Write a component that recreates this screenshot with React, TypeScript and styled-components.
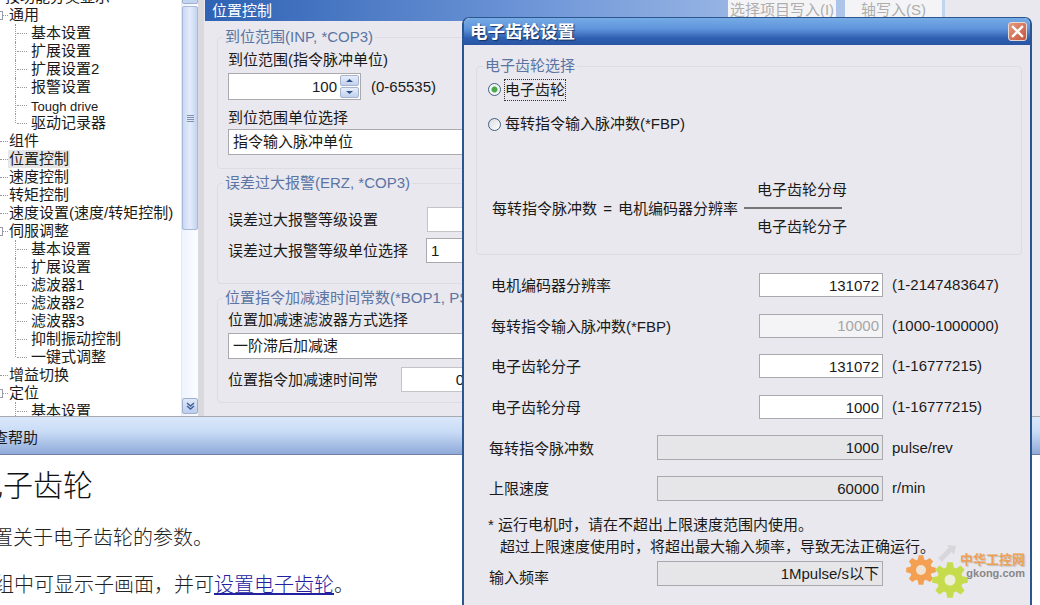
import React from "react";
import styled, { createGlobalStyle } from "styled-components";

const TREE = [
  { title: "按功能分类显示", level: 0, cut: true },
  { title: "通用", level: 0, box: true },
  { title: "基本设置", level: 1 },
  { title: "扩展设置", level: 1 },
  { title: "扩展设置2", level: 1 },
  { title: "报警设置", level: 1 },
  { title: "Tough drive", level: 1, small: true },
  { title: "驱动记录器", level: 1, last: true },
  { title: "组件", level: 0 },
  { title: "位置控制", level: 0, selected: true },
  { title: "速度控制", level: 0 },
  { title: "转矩控制", level: 0 },
  { title: "速度设置(速度/转矩控制)", level: 0 },
  { title: "伺服调整", level: 0, box: true },
  { title: "基本设置", level: 1 },
  { title: "扩展设置", level: 1 },
  { title: "滤波器1", level: 1 },
  { title: "滤波器2", level: 1 },
  { title: "滤波器3", level: 1 },
  { title: "抑制振动控制", level: 1 },
  { title: "一键式调整", level: 1, last: true },
  { title: "增益切换", level: 0 },
  { title: "定位", level: 0, box: true },
  { title: "基本设置", level: 1 },
];

const FORM_ROWS = [
  { label: "电机编码器分辨率", value: "131072", range: "(1-2147483647)" },
  { label: "每转指令输入脉冲数(*FBP)", value: "10000", range: "(1000-1000000)", disabled: true },
  { label: "电子齿轮分子", value: "131072", range: "(1-16777215)" },
  { label: "电子齿轮分母", value: "1000", range: "(1-16777215)" },
];

const gearPath = (cx: number, cy: number, inner: number, outer: number, teeth: number) => {
  const points: string[] = [];
  const step = (Math.PI * 2) / teeth;
  for (let i = 0; i < teeth; i++) {
    const a = i * step;
    [
      [a - step * 0.38, inner],
      [a - step * 0.2, outer],
      [a + step * 0.2, outer],
      [a + step * 0.38, inner],
    ].forEach(([t, r]) => {
      points.push(`${(cx + Math.cos(t) * r).toFixed(1)},${(cy + Math.sin(t) * r).toFixed(1)}`);
    });
  }
  return `M${points.join("L")}Z`;
};

const App = () => {
  return (
    <Screen>
      <GlobalStyle />
      <TopArea>
        <Sidebar>
          <Tree>
            <TreeList>
              {TREE.map((item, index) => (
                <TreeRow key={index} $level={item.level} $last={item.last}>
                  {item.box && <ExpandBox />}
                  <TreeText $selected={item.selected} $small={item.small} $cut={item.cut}>
                    {item.title}
                  </TreeText>
                </TreeRow>
              ))}
            </TreeList>
          </Tree>
          <Scrollbar>
            <ScrollCap />
            <ScrollThumb>
              <Grip />
            </ScrollThumb>
            <ScrollDown>
              <svg width="11" height="10" viewBox="0 0 11 10">
                <path d="M2 2l3.5 3 3.5-3M2 5l3.5 3 3.5-3" fill="none" stroke="#3f5f96" strokeWidth="1.4" />
              </svg>
            </ScrollDown>
          </Scrollbar>
        </Sidebar>
        <Panel>
          <PanelHeader>
            <PanelTitle>位置控制</PanelTitle>
            <HeaderButton $width={108}>选择项目写入(I)</HeaderButton>
            <HeaderButton $width={97}>轴写入(S)</HeaderButton>
          </PanelHeader>
          <PanelBody>
            <Group $height={141}>
              <GroupTitle>到位范围(INP, *COP3)</GroupTitle>
              <FieldLabel $top={5}>到位范围(指令脉冲单位)</FieldLabel>
              <Row $top={4}>
                <SpinBox>
                  100
                  <SpinButtons>
                    <SpinButton>
                      <svg width="9" height="5" viewBox="0 0 9 5"><path d="M1 4l3.5-3 3.5 3z" fill="#2f4f86" /></svg>
                    </SpinButton>
                    <SpinButton>
                      <svg width="9" height="5" viewBox="0 0 9 5"><path d="M1 1l3.5 3 3.5-3z" fill="#2f4f86" /></svg>
                    </SpinButton>
                  </SpinButtons>
                </SpinBox>
                <RangeText $gap={10}>(0-65535)</RangeText>
              </Row>
              <FieldLabel $top={9}>到位范围单位选择</FieldLabel>
              <SelectBox $top={2}>指令输入脉冲单位</SelectBox>
            </Group>
            <Group $height={110}>
              <GroupTitle>误差过大报警(ERZ, *COP3)</GroupTitle>
              <Row $top={15}>
                <RowLabel $width={199}>误差过大报警等级设置</RowLabel>
                <PanelField />
              </Row>
              <Row $top={6}>
                <RowLabel $width={198}>误差过大报警等级单位选择</RowLabel>
                <PanelField $select>1</PanelField>
              </Row>
            </Group>
            <Group $height={114}>
              <GroupTitle>位置指令加减速时间常数(*BOP1, PST1)</GroupTitle>
              <FieldLabel $top={4}>位置加减速滤波器方式选择</FieldLabel>
              <SelectBox $top={4}>一阶滞后加减速</SelectBox>
              <Row $top={8}>
                <RowLabel $width={173}>位置指令加减速时间常</RowLabel>
                <PanelField $value>0</PanelField>
              </Row>
            </Group>
          </PanelBody>
        </Panel>
      </TopArea>
      <HelpBar>
        <HelpBarText>查帮助</HelpBarText>
      </HelpBar>
      <HelpContent>
        <HelpTitle>电子齿轮</HelpTitle>
        <HelpLine $top={18} $shift={-27}>设置关于电子齿轮的参数。</HelpLine>
        <HelpLine $top={19} $shift={-26}>
          在组中可显示子画面，并可<HelpLink>设置电子齿轮</HelpLink>。
        </HelpLine>
      </HelpContent>

      <Dialog>
        <DialogTitleBar>
          <DialogTitle>电子齿轮设置</DialogTitle>
          <CloseButton>
            <svg width="13" height="13" viewBox="0 0 13 13">
              <path d="M2 2l9 9M11 2l-9 9" stroke="#fff" strokeWidth="2.4" strokeLinecap="square" />
            </svg>
          </CloseButton>
        </DialogTitleBar>
        <DialogBody>
          <DialogGroup>
            <DialogLegend>电子齿轮选择</DialogLegend>
            <RadioRow $top={3}>
              <Radio $checked />
              <FocusLabel>电子齿轮</FocusLabel>
            </RadioRow>
            <RadioRow $top={13}>
              <Radio />
              <RadioLabel>每转指令输入脉冲数(*FBP)</RadioLabel>
            </RadioRow>
            <Formula>
              <FormulaText>每转指令脉冲数 = 电机编码器分辨率</FormulaText>
              <Fraction>
                <FractionTop>电子齿轮分母</FractionTop>
                <FractionBottom>电子齿轮分子</FractionBottom>
              </Fraction>
            </Formula>
          </DialogGroup>
          <FormRows>
            {FORM_ROWS.map((row, index) => (
              <FormRow key={index}>
                <FormLabel $width={268} $inset={15}>{row.label}</FormLabel>
                <FormInput readOnly value={row.value} $disabled={row.disabled} />
                <RangeText $gap={9}>{row.range}</RangeText>
              </FormRow>
            ))}
            <FormRow>
              <FormLabel $width={168} $inset={13}>每转指令脉冲数</FormLabel>
              <FormDisplay>1000</FormDisplay>
              <RangeText $gap={9}>pulse/rev</RangeText>
            </FormRow>
            <FormRow>
              <FormLabel $width={168} $inset={13}>上限速度</FormLabel>
              <FormDisplay>60000</FormDisplay>
              <RangeText $gap={9}>r/min</RangeText>
            </FormRow>
          </FormRows>
          <Note>
            <div>* 运行电机时，请在不超出上限速度范围内使用。</div>
            <NoteIndent>超过上限速度使用时，将超出最大输入频率，导致无法正确运行。</NoteIndent>
          </Note>
          <FreqRow>
            <FreqLabel>输入频率</FreqLabel>
            <FormDisplay>1Mpulse/s以下</FormDisplay>
          </FreqRow>
        </DialogBody>
      </Dialog>

      <Watermark>
        <svg width="66" height="56" viewBox="0 0 66 56">
          <path d="M35 15L47 3" stroke="#d6d6da" strokeWidth="5" />
          <path d="M42 0l9 1-2 9z" fill="#d6d6da" />
          <path d={gearPath(16, 25, 11, 15, 8)} fill="#f59a45" />
          <circle cx="16" cy="25" r="5" fill="#f1e3d3" />
          <path d={gearPath(45, 35, 13, 18, 8)} fill="#c4dc3f" />
          <circle cx="45" cy="35" r="5.5" fill="#eef0d8" />
        </svg>
        <WatermarkText>
          <WatermarkName>中华工控网</WatermarkName>
          <WatermarkSite>gkong.com</WatermarkSite>
        </WatermarkText>
      </Watermark>
    </Screen>
  );
};

const GlobalStyle = createGlobalStyle`
  html, body {
    margin: 0;
    padding: 0;
    overflow: hidden;
    background: #fff;
  }
  * {
    box-sizing: border-box;
  }
`;

const Screen = styled.div`
  position: relative;
  width: 1040px;
  height: 605px;
  overflow: hidden;
  display: flex;
  flex-direction: column;
  font-family: "Liberation Sans", "Noto Sans CJK SC", sans-serif;
  font-size: 15px;
  line-height: 18px;
  color: #1a1a1a;
  background: #e9e8ee;
`;

const TopArea = styled.div`
  display: flex;
  height: 417px;
  flex-shrink: 0;
  border-bottom: 1px solid #a9a9b0;
`;

const Sidebar = styled.div`
  display: flex;
  width: 204px;
  flex-shrink: 0;
  background: #fff;
  border-right: 6px solid #d9d9de;
  box-shadow: inset -1px 0 0 #6d6d75;
  position: relative;
`;

const Tree = styled.div`
  width: 181px;
  overflow: hidden;
  background: #fff;
`;

const TreeList = styled.ul`
  list-style: none;
  margin: -12px 0 0;
  padding: 0;
`;

const TreeRow = styled.li<{ $level: number; $last?: boolean }>`
  position: relative;
  height: 18px;
  display: flex;
  align-items: center;
  white-space: nowrap;
  padding-left: ${(p) => (p.$level ? 31 : 9)}px;

  &::before {
    content: "";
    position: absolute;
    top: 9px;
    left: ${(p) => (p.$level ? 17 : 0)}px;
    width: ${(p) => (p.$level ? 10 : 8)}px;
    border-top: 1px dotted #9a9a9a;
  }

  &::after {
    content: "";
    position: absolute;
    top: 0;
    left: 15px;
    height: ${(p) => (p.$last ? 9 : 18)}px;
    border-left: ${(p) => (p.$level ? "1px dotted #9a9a9a" : "none")};
  }
`;

const ExpandBox = styled.span`
  position: absolute;
  left: -6px;
  top: 5px;
  width: 9px;
  height: 9px;
  border: 1px solid #9a9aa8;
  background: #fff;
  z-index: 1;
`;

const TreeText = styled.span<{ $selected?: boolean; $small?: boolean; $cut?: boolean }>`
  padding: ${(p) => (p.$small ? "3px 0 0" : p.$selected ? "0 1px" : "0")};
  margin-left: ${(p) => (p.$selected ? "-1px" : p.$cut ? "-4px" : "0")};
  background: ${(p) => (p.$selected ? "#e6e6e6" : "transparent")};
  font-size: ${(p) => (p.$small ? "13px" : "15px")};
`;

const Scrollbar = styled.div`
  width: 17px;
  display: flex;
  flex-direction: column;
  gap: 2px;
  background: linear-gradient(90deg, #eef4fd, #fbfcff);
  border-left: 1px solid #e6e9f2;
`;

const ScrollCap = styled.div`
  height: 4px;
  flex-shrink: 0;
  background: #c3d4f2;
  border: 1px solid #9fb0cf;
  border-top: 0;
  border-radius: 0 0 2px 2px;
`;

const ScrollThumb = styled.div`
  height: 224px;
  flex-shrink: 0;
  display: flex;
  align-items: center;
  justify-content: center;
  background: linear-gradient(90deg, #c8d8f4, #e4ecfb 50%, #c3d3f0);
  border: 1px solid #a8b8d6;
  border-radius: 2px;
`;

const Grip = styled.div`
  width: 7px;
  height: 7px;
  background: repeating-linear-gradient(180deg, #7f8fb0 0 1px, transparent 1px 2px);
`;

const ScrollDown = styled.div`
  margin-top: auto;
  margin-bottom: 2px;
  height: 16px;
  flex-shrink: 0;
  display: flex;
  align-items: center;
  justify-content: center;
  background: linear-gradient(180deg, #dfe8f9, #bccdee);
  border: 1px solid #9fb0cf;
  border-radius: 2px;
`;

const Panel = styled.div`
  width: 740px;
  margin-left: 1px;
  flex-shrink: 0;
  display: flex;
  flex-direction: column;
  overflow: hidden;
`;

const PanelHeader = styled.div`
  height: 21px;
  flex-shrink: 0;
  display: flex;
  align-items: flex-start;
  gap: 9px;
  padding-right: 3px;
  background: linear-gradient(90deg, #2f62b4, #6f97d8 45%, #c3d4f0);
`;

const PanelTitle = styled.div`
  margin-right: auto;
  padding: 2px 0 0 7px;
  color: #fff;
`;

const HeaderButton = styled.div<{ $width: number }>`
  width: ${(p) => p.$width}px;
  height: 20px;
  text-align: center;
  line-height: 20px;
  white-space: nowrap;
  overflow: hidden;
  color: #aeaeae;
  background: #f4f4f6;
`;

const PanelBody = styled.div`
  padding: 7px 0 0 12px;
  display: flex;
  flex-direction: column;
  gap: 5px;
`;

const Group = styled.fieldset<{ $height: number }>`
  margin: 0;
  padding: 0 0 0 10px;
  width: 700px;
  height: ${(p) => p.$height}px;
  border: 1px solid #dcdce2;
  border-radius: 4px;
`;

const GroupTitle = styled.legend`
  margin-left: -5px;
  padding: 0 2px;
  line-height: 18px;
  color: #5a74a4;
  white-space: nowrap;
`;

const FieldLabel = styled.div<{ $top: number }>`
  margin-top: ${(p) => p.$top}px;
  height: 18px;
`;

const Row = styled.div<{ $top: number }>`
  display: flex;
  align-items: center;
  margin-top: ${(p) => p.$top}px;
`;

const RowLabel = styled.div<{ $width: number }>`
  width: ${(p) => p.$width}px;
  flex-shrink: 0;
`;

const SpinBox = styled.div`
  width: 133px;
  height: 27px;
  display: flex;
  align-items: center;
  justify-content: flex-end;
  gap: 3px;
  padding-right: 1px;
  background: #fff;
  border: 1px solid #a9a9ae;
`;

const SpinButtons = styled.div`
  width: 19px;
  display: flex;
  flex-direction: column;
  gap: 1px;
`;

const SpinButton = styled.div`
  height: 11px;
  display: flex;
  align-items: center;
  justify-content: center;
  background: linear-gradient(180deg, #e7eefb, #c1d1ec);
  border: 1px solid #a6b4cf;
  border-radius: 2px;
`;

const RangeText = styled.div<{ $gap: number }>`
  margin-left: ${(p) => p.$gap}px;
  white-space: nowrap;
`;

const SelectBox = styled.div<{ $top: number }>`
  margin-top: ${(p) => p.$top}px;
  width: 400px;
  height: 26px;
  padding-left: 4px;
  line-height: 24px;
  background: #fff;
  border: 1px solid #a9a9ae;
`;

const PanelField = styled.div<{ $select?: boolean; $value?: boolean }>`
  width: ${(p) => (p.$value ? 64 : 120)}px;
  height: 25px;
  padding: 0 ${(p) => (p.$value ? 0 : 4)}px;
  line-height: 23px;
  text-align: ${(p) => (p.$value ? "right" : "left")};
  background: #fff;
  border: 1px solid ${(p) => (p.$select ? "#a9a9ae" : "#c4c4c8")};
`;

const HelpBar = styled.div`
  height: 38px;
  flex-shrink: 0;
  display: flex;
  align-items: center;
  background: linear-gradient(180deg, #d9e8fb, #c9dcf6 40%, #8faad9);
  border-bottom: 1px solid #6f7f9f;
`;

const HelpBarText = styled.div`
  margin-left: -7px;
  padding-top: 4px;
`;

const HelpContent = styled.div`
  flex: 1;
  padding-top: 11px;
  background: #fff;
  white-space: nowrap;
`;

const HelpTitle = styled.div`
  margin-left: -27px;
  font-size: 30px;
  line-height: 40px;
  font-weight: 300;
  color: #111;
`;

const HelpLine = styled.div<{ $top: number; $shift: number }>`
  margin: ${(p) => p.$top}px 0 0 ${(p) => p.$shift}px;
  font-size: 20px;
  line-height: 28px;
  font-weight: 300;
  color: #222;
`;

const HelpLink = styled.span`
  color: #2222a0;
  text-decoration: underline;
`;

const Dialog = styled.div`
  position: absolute;
  left: 462px;
  top: 17px;
  width: 570px;
  height: 600px;
  display: flex;
  flex-direction: column;
  background: #e9e8ee;
  border: 2px solid #2c568f;
  border-top: 1px solid #2c568f;
  border-radius: 7px 7px 0 0;
`;

const DialogTitleBar = styled.div`
  height: 27px;
  flex-shrink: 0;
  display: flex;
  align-items: center;
  justify-content: space-between;
  padding: 0 3px 0 6px;
  background: linear-gradient(180deg, #76abe6, #5f94dc 40%, #2d5fb0 75%, #2a55a4);
  border-radius: 6px 6px 0 0;
`;

const DialogTitle = styled.div`
  font-size: 17.5px;
  font-weight: 700;
  color: #fff;
  text-shadow: 1px 1px 1px #17315f;
`;

const CloseButton = styled.div`
  width: 19px;
  height: 19px;
  display: flex;
  align-items: center;
  justify-content: center;
  background: linear-gradient(135deg, #e79a80, #c4553a);
  border: 1px solid #e8d8d2;
  border-radius: 3px;
`;

const DialogBody = styled.div`
  padding: 12px 8px 0 12px;
`;

const DialogGroup = styled.fieldset`
  margin: 0;
  padding: 0;
  height: 198px;
  border: 1px solid #dcdce2;
  border-radius: 4px;
`;

const DialogLegend = styled.legend`
  margin-left: 6px;
  padding: 0 2px;
  line-height: 18px;
  color: #5a74a4;
`;

const RadioRow = styled.div<{ $top: number }>`
  height: 22px;
  margin-top: ${(p) => p.$top}px;
  padding-left: 11px;
  display: flex;
  align-items: center;
  gap: 4px;
`;

const Radio = styled.span<{ $checked?: boolean }>`
  width: 13px;
  height: 13px;
  flex-shrink: 0;
  border-radius: 50%;
  border: 1px solid #3f5f86;
  background: ${(p) =>
    p.$checked ? "radial-gradient(circle, #4aa84a 0 2.5px, #f4f6f4 3.5px)" : "linear-gradient(135deg, #dcdce0, #fff)"};
`;

const FocusLabel = styled.span`
  padding: 1px 0;
  margin-top: 1px;
  outline: 1px dotted #333;
`;

const RadioLabel = styled.span`
  white-space: nowrap;
`;

const Formula = styled.div`
  margin: 46px 0 0 15px;
  display: flex;
  align-items: center;
  gap: 6px;
  white-space: nowrap;
`;

const FormulaText = styled.span`
  word-spacing: 2px;
`;

const Fraction = styled.div`
  width: 98px;
  text-indent: 13px;
`;

const FractionTop = styled.div`
  padding-bottom: 8px;
  border-bottom: 2px solid #777;
`;

const FractionBottom = styled.div`
  padding-top: 9px;
`;

const FormRows = styled.div`
  margin-top: 10px;
  display: grid;
  grid-auto-rows: 40.6px;
`;

const FormRow = styled.div`
  display: flex;
  align-items: center;
`;

const FormLabel = styled.div<{ $width: number; $inset: number }>`
  margin-left: ${(p) => p.$inset}px;
  padding-top: 2px;
  width: ${(p) => p.$width}px;
  flex-shrink: 0;
  white-space: nowrap;
`;

const FormInput = styled.input<{ $disabled?: boolean }>`
  width: 124px;
  height: 24px;
  padding: 0 3px 0 0;
  text-align: right;
  font: inherit;
  color: ${(p) => (p.$disabled ? "#a6a6a6" : "#1a1a1a")};
  background: ${(p) => (p.$disabled ? "#f4f4f6" : "#fff")};
  border: 1px solid #a9a9ae;
  outline: none;
`;

const FormDisplay = styled.div`
  width: 226px;
  height: 25px;
  padding-right: 3px;
  line-height: 23px;
  text-align: right;
  background: #e6e6e8;
  border: 1px solid #a9a9ae;
`;

const Note = styled.div`
  margin: 5px 0 0 12px;
  line-height: 22px;
  white-space: nowrap;
`;

const NoteIndent = styled.div`
  padding-left: 12px;
`;

const FreqRow = styled.div`
  margin-top: 3px;
  display: flex;
  align-items: flex-start;
`;

const FreqLabel = styled.div`
  width: 168px;
  margin-left: 13px;
  padding-top: 8px;
`;

const Watermark = styled.div`
  position: absolute;
  left: 905px;
  top: 545px;
  display: flex;
  align-items: flex-start;
  opacity: 0.92;
`;

const WatermarkText = styled.div`
  margin: 7px 0 0 -11px;
  display: flex;
  flex-direction: column;
  align-items: flex-end;
`;

const WatermarkName = styled.div`
  font-size: 13px;
  line-height: 15px;
  font-weight: 700;
  color: #ef9a4a;
  text-shadow: 1px 1px 1px #bbb;
  white-space: nowrap;
`;

const WatermarkSite = styled.div`
  font-size: 11px;
  line-height: 13px;
  font-weight: 700;
  color: #7f7f7f;
`;

export default App;
